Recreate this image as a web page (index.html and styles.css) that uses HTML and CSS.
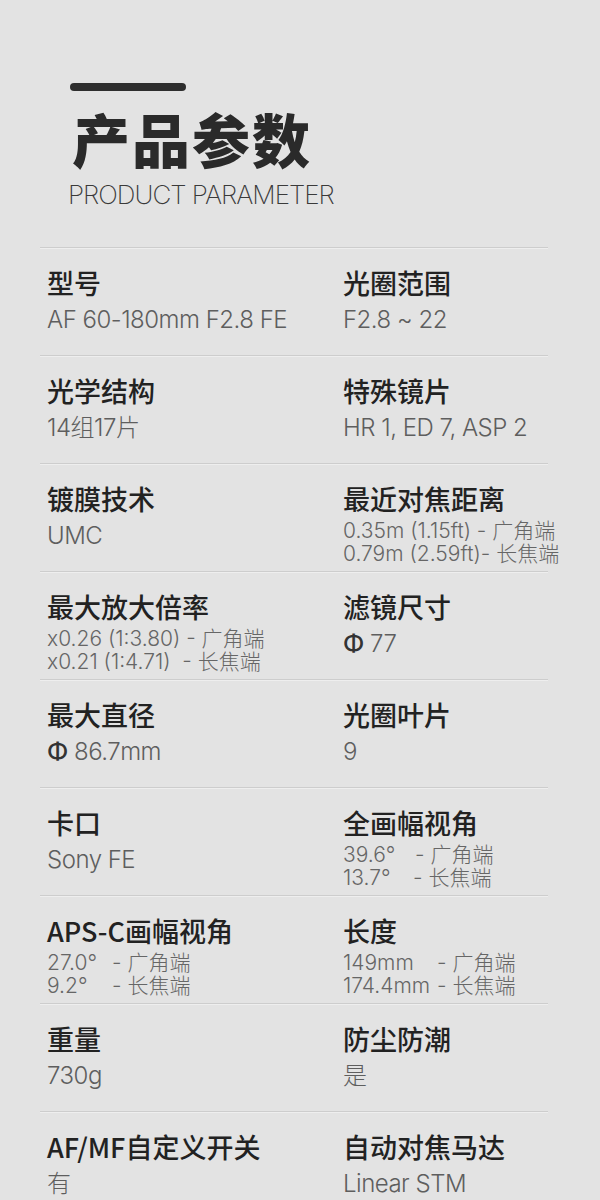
FILE: index.html
```html
<!DOCTYPE html>
<html lang="zh-CN">
<head>
<meta charset="utf-8">
<title>产品参数</title>
<link rel="stylesheet" href="styles.css">
</head>
<body>
<div class="page">
  <header class="head">
    <div class="bar"></div>
    <h1 class="title">产品参数</h1>
    <div class="subtitle">PRODUCT PARAMETER</div>
  </header>
  <div class="specs">
    <div class="row">
      <div class="cell"><div class="label">型号</div><div class="value">AF 60-180mm F2.8 FE</div></div>
      <div class="cell"><div class="label">光圈范围</div><div class="value">F2.8 ~ 22</div></div>
    </div>
    <div class="row">
      <div class="cell"><div class="label">光学结构</div><div class="value">14组17片</div></div>
      <div class="cell"><div class="label">特殊镜片</div><div class="value">HR 1, ED 7, ASP 2</div></div>
    </div>
    <div class="row">
      <div class="cell"><div class="label">镀膜技术</div><div class="value">UMC</div></div>
      <div class="cell"><div class="label">最近对焦距离</div>
        <div class="small"><span>0.35m (1.15ft) - 广角端</span><span>0.79m (2.59ft)- 长焦端</span></div></div>
    </div>
    <div class="row">
      <div class="cell"><div class="label">最大放大倍率</div>
        <div class="small"><span>x0.26 (1:3.80) - 广角端</span><span>x0.21 (1:4.71) &nbsp;- 长焦端</span></div></div>
      <div class="cell"><div class="label">滤镜尺寸</div><div class="value"><b class="phi">Φ</b> 77</div></div>
    </div>
    <div class="row">
      <div class="cell"><div class="label">最大直径</div><div class="value"><b class="phi">Φ</b> 86.7mm</div></div>
      <div class="cell"><div class="label">光圈叶片</div><div class="value">9</div></div>
    </div>
    <div class="row">
      <div class="cell"><div class="label">卡口</div><div class="value">Sony FE</div></div>
      <div class="cell"><div class="label">全画幅视角</div>
        <div class="small"><span><i class="num n1">39.6°</i>- 广角端</span><span><i class="num n1b">13.7°</i>- 长焦端</span></div></div>
    </div>
    <div class="row">
      <div class="cell"><div class="label">APS-C画幅视角</div>
        <div class="small"><span><i class="num n2">27.0°</i>- 广角端</span><span><i class="num n2">9.2°</i>- 长焦端</span></div></div>
      <div class="cell"><div class="label">长度</div>
        <div class="small"><span><i class="num n3">149mm</i>- 广角端</span><span><i class="num n3">174.4mm</i>- 长焦端</span></div></div>
    </div>
    <div class="row">
      <div class="cell"><div class="label">重量</div><div class="value">730g</div></div>
      <div class="cell"><div class="label">防尘防潮</div><div class="value">是</div></div>
    </div>
    <div class="row">
      <div class="cell"><div class="label">AF/MF自定义开关</div><div class="value">有</div></div>
      <div class="cell"><div class="label">自动对焦马达</div><div class="value">Linear STM</div></div>
    </div>
  </div>
</div>
</body>
</html>
```

FILE: styles.css
```css
html, body {
  margin: 0;
  padding: 0;
  background: #e3e3e3;
  overflow: hidden;
  height: 1200px;
}

.page {
  width: 600px;
  font-family: "Inter", "Noto Sans CJK SC", sans-serif;
}

.head {
  padding: 83px 0 0 70px;
  height: 164px;
  box-sizing: content-box;
}

.bar {
  width: 116px;
  height: 8px;
  border-radius: 4px;
  background: #2e2e2e;
}

.title {
  margin: 19px 0 0 2px;
  font-family: "Noto Sans CJK SC", sans-serif;
  font-weight: 900;
  font-size: 58px;
  line-height: 56px;
  letter-spacing: 2px;
  color: #2a2a2a;
}

.subtitle {
  margin: 14px 0 0 -2px;
  font-family: "Inter", sans-serif;
  font-weight: 200;
  font-size: 26px;
  line-height: 30px;
  letter-spacing: -1px;
  color: #3a3a3a;
}

.specs {
  margin-left: 40px;
  width: 508px;
}

.row {
  display: grid;
  grid-template-columns: 296px 1fr;
  height: 108px;
  box-sizing: border-box;
  padding: 19px 0 0 7px;
  border-top: 1px solid #cdcdcd;
  box-shadow: inset 0 1px 0 #eeeeee;
}

.label {
  font-family: "Noto Sans CJK SC", sans-serif;
  font-weight: 500;
  font-size: 27px;
  line-height: 31px;
  color: #222222;
  white-space: nowrap;
}

.value {
  margin-top: 7px;
  font-family: "Inter", "Noto Sans CJK SC", sans-serif;
  font-weight: 300;
  font-size: 24px;
  line-height: 30px;
  letter-spacing: -0.5px;
  color: #5e5e5e;
  white-space: nowrap;
}

.phi {
  font-weight: 500;
  color: #333333;
}

.small {
  margin-top: 5px;
  display: flex;
  flex-direction: column;
  font-family: "Inter", "Noto Sans CJK SC", sans-serif;
  font-weight: 300;
  font-size: 21px;
  line-height: 23px;
  color: #666666;
  white-space: nowrap;
}

.num {
  font-style: normal;
  display: inline-block;
}

.n1 { width: 72px; }
.n1b { width: 70px; }
.n2 { width: 65px; }
.n3 { width: 94px; }
```
